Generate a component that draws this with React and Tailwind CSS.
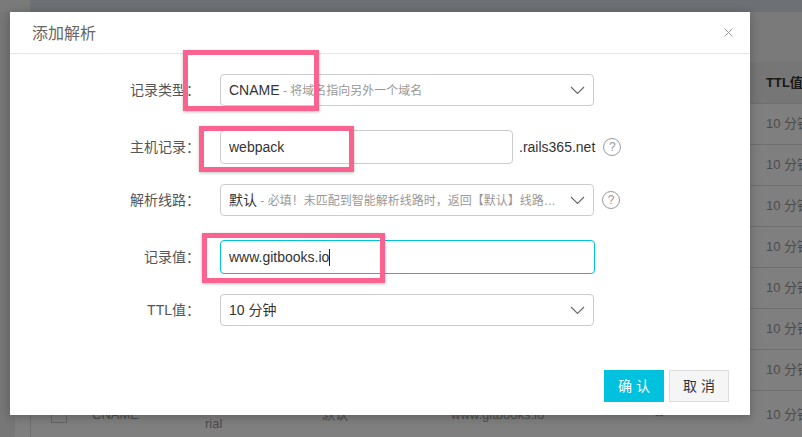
import React from 'react';

const rows = [
    { type: 'A', host: '@', line: '默认', value: '139.162.23.11', mx: '--', ttl: '10 分钟' },
    { type: 'A', host: 'www', line: '默认', value: '139.162.23.11', mx: '--', ttl: '10 分钟' },
    { type: 'CNAME', host: 'blog', line: '默认', value: 'rails365.github.io', mx: '--', ttl: '10 分钟' },
    { type: 'MX', host: '@', line: '默认', value: 'mxbiz1.qq.com', mx: '5', ttl: '10 分钟' },
    { type: 'MX', host: '@', line: '默认', value: 'mxbiz2.qq.com', mx: '10', ttl: '10 分钟' },
    { type: 'TXT', host: '@', line: '默认', value: 'v=spf1 include:spf.mail.qq.com', mx: '--', ttl: '10 分钟' },
    { type: 'CNAME', host: 'mail', line: '默认', value: 'exmail.qq.com', mx: '--', ttl: '10 分钟' },
];

const cols = 'grid grid-cols-[49px_113px_117px_129px_204px_111px_80px]';

const Checkbox = () => (
    <div className="w-[16px] h-[16px] border border-[#cccccc] bg-white"></div>
);

const Chevron = () => (
    <svg width="15" height="9" viewBox="0 0 15 9" className="shrink-0 ml-[10px]">
        <polyline points="1,1 7.5,7.5 14,1" fill="none" stroke="#666" strokeWidth="1.1" />
    </svg>
);

const Help = () => (
    <span className="ml-[8px] w-[18px] h-[18px] rounded-full border border-[#999] text-[#999] text-[12px] leading-none flex items-center justify-center">?</span>
);

const Select = ({ children }) => (
    <div className="w-[374px] h-[32px] border border-[#cccccc] rounded-[4px] flex items-center pl-[8px] pr-[8px]">
        <div className="flex-1 min-w-0 truncate text-[12px] text-[#999]">{children}</div>
        <Chevron />
    </div>
);

const Row = ({ label, children, className }) => (
    <div className={`flex items-center ${className || ''}`}>
        <label className="w-[190px] mr-[20px] text-right text-[14px] text-[#555]">{label}</label>
        {children}
    </div>
);

const App = () => {
    return (
        <div className="relative w-[802px] h-[437px] overflow-hidden bg-white font-['Liberation_Sans','Noto_Sans_CJK_SC',sans-serif]">

            {/* page behind the dialog */}
            <div className="flex flex-col h-full">
                <div className="flex h-[12px] shrink-0">
                    <div className="w-[30px] shrink-0 bg-[#f4f4f4]"></div>
                    <div className="flex-1 bg-[#dbe1e8]"></div>
                </div>
                <div className="flex flex-1 min-h-0">
                    <div className="w-[15px] shrink-0 bg-[#eeeeee]"></div>
                    <div className="w-[15px] shrink-0 bg-white"></div>
                    <div className="flex-1 min-w-0 overflow-hidden border-l border-[#dddddd] flex flex-col">
                        <div className="h-[50px] shrink-0 bg-[#f4f4f4]"></div>
                        <div className={`${cols} h-[42px] shrink-0 items-center bg-[#ececec] border-b border-[#dedede] text-[13px] font-bold text-[#333]`}>
                            <div className="pl-[20px]"><Checkbox /></div>
                            <div className="pl-[12px]">记录类型</div>
                            <div className="pl-[12px]">主机记录</div>
                            <div className="pl-[12px]">解析线路</div>
                            <div className="pl-[12px]">记录值</div>
                            <div className="pl-[12px]">MX优先级</div>
                            <div className="pl-[12px] whitespace-nowrap">TTL值</div>
                        </div>
                        {rows.map((r, i) => (
                            <div key={i} className={`${cols} h-[41px] shrink-0 items-center border-b border-[#dedede] text-[13px] text-[#999]`}>
                                <div className="pl-[20px]"><Checkbox /></div>
                                <div className="pl-[12px]">{r.type}</div>
                                <div className="pl-[12px]">{r.host}</div>
                                <div className="pl-[12px]">{r.line}</div>
                                <div className="pl-[12px] truncate">{r.value}</div>
                                <div className="pl-[12px]">{r.mx}</div>
                                <div className="pl-[12px] whitespace-nowrap">{r.ttl}</div>
                            </div>
                        ))}
                        <div className={`${cols} h-[47px] shrink-0 items-center text-[13px] leading-[17px] text-[#999]`}>
                            <div className="pl-[20px]"><Checkbox /></div>
                            <div className="pl-[12px]">CNAME</div>
                            <div className="pl-[12px]">webpack-tuto<br />rial</div>
                            <div className="pl-[12px]">默认</div>
                            <div className="pl-[12px]">www.gitbooks.io</div>
                            <div className="pl-[12px]">--</div>
                            <div className="pl-[12px] whitespace-nowrap">10 分钟</div>
                        </div>
                    </div>
                </div>
            </div>

            {/* backdrop */}
            <div className="absolute inset-0 bg-black/50"></div>

            {/* dialog */}
            <div className="absolute left-[10px] top-[12px] w-[740px] h-[403px] bg-white shadow-[0_2px_10px_rgba(0,0,0,0.25)] flex flex-col">
                <div className="h-[42px] shrink-0 flex items-center justify-between pl-[22px] pr-[17px] border-b border-[#e5e5e5]">
                    <span className="text-[16px] text-[#666] pt-[2px]">添加解析</span>
                    <svg width="9" height="9" viewBox="0 0 9 9">
                        <path d="M0.5 0.5 L8.5 8.5 M8.5 0.5 L0.5 8.5" stroke="#999" strokeWidth="1" />
                    </svg>
                </div>

                <div className="pt-[20px] flex flex-col">
                    <Row label="记录类型：" className="h-[32px]">
                        <Select>
                            <span className="text-[14px] text-[#333]">CNAME</span> - 将域名指向另外一个域名
                        </Select>
                    </Row>
                    <Row label="主机记录：" className="h-[34px] mt-[24px]">
                        <div className="w-[293px] h-[34px] border border-[#cccccc] rounded-[4px] flex items-center pl-[8px] text-[14px] text-[#333]">webpack</div>
                        <span className="ml-[6px] text-[14px] text-[#333]">.rails365.net</span>
                        <Help />
                    </Row>
                    <Row label="解析线路：" className="h-[32px] mt-[20px]">
                        <Select>
                            <span className="text-[14px] text-[#333]">默认</span> - 必填！未匹配到智能解析线路时，返回【默认】线路解析结果
                        </Select>
                        <Help />
                    </Row>
                    <Row label="记录值：" className="h-[34px] mt-[24px]">
                        <div className="w-[375px] h-[34px] border border-[#00c1de] rounded-[4px] flex items-center pl-[8px] text-[14px] text-[#333]">
                            www.gitbooks.io<span className="w-[1px] h-[17px] bg-[#222]"></span>
                        </div>
                    </Row>
                    <Row label="TTL值：" className="h-[32px] mt-[20px]">
                        <Select>
                            <span className="text-[14px] text-[#333]">10 分钟</span>
                        </Select>
                    </Row>
                </div>

                <div className="mt-auto flex justify-end gap-[5px] pr-[21px] pb-[13px]">
                    <button className="w-[60px] h-[32px] bg-[#00c1de] text-white text-[14px]">确 认</button>
                    <button className="w-[60px] h-[32px] bg-[#f5f5f5] border border-[#dddddd] text-[#333] text-[14px]">取 消</button>
                </div>

                {/* pink annotation boxes */}
                <div className="absolute left-[173px] top-[38px] w-[136px] h-[61px] border-[5px] border-[#fa6390] shadow-[0_1px_3px_rgba(0,0,0,0.25)]"></div>
                <div className="absolute left-[189px] top-[114px] w-[155px] h-[46px] border-[5px] border-[#fa6390] shadow-[0_1px_3px_rgba(0,0,0,0.25)]"></div>
                <div className="absolute left-[192px] top-[221px] w-[183px] h-[50px] border-[5px] border-[#fa6390] shadow-[0_1px_3px_rgba(0,0,0,0.25)]"></div>
            </div>
        </div>
    );
};

export default App;
